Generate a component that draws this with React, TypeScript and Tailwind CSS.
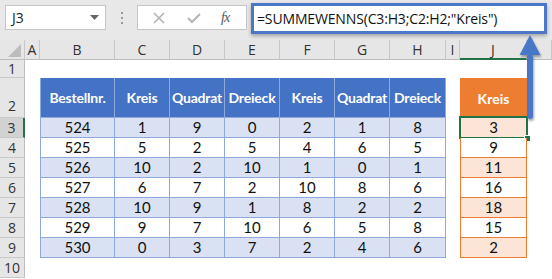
import React from "react";

const widths = [25, 15, 75, 55, 55, 55, 55, 55, 56, 14, 67, 25];
const letters = ["", "A", "B", "C", "D", "E", "F", "G", "H", "I", "J", ""];

const heads = ["Bestellnr.", "Kreis", "Quadrat", "Dreieck", "Kreis", "Quadrat", "Dreieck"];

const rows = [
	[524, 1, 9, 0, 2, 1, 8, 3],
	[525, 5, 2, 5, 4, 6, 5, 9],
	[526, 10, 2, 10, 1, 0, 1, 11],
	[527, 6, 7, 2, 10, 8, 6, 16],
	[528, 10, 9, 1, 8, 2, 2, 18],
	[529, 9, 7, 10, 6, 5, 8, 15],
	[530, 0, 3, 7, 2, 4, 6, 2],
];

const cellFont = { fontFamily: "Lato, 'Liberation Sans', sans-serif" };
const uiFont = { fontFamily: "'Open Sans', 'Noto Sans', sans-serif" };

const RowHead = ({ n, h, selected, bottom }: { n: number; h: string; selected?: boolean; bottom?: boolean }) => (
	<div
		className={`w-[25px] shrink-0 ${h} flex justify-center border-b border-[#c8c8c8] text-[14px] text-[#333] ${
			bottom ? "items-end pb-[1px]" : "items-center"
		} ${selected ? "bg-[#d2d2d2] border-r-2 border-r-[#217346]" : "bg-[#e6e6e6] border-r border-r-[#bdbdbd]"}`}
		style={uiFont}
	>
		{n}
	</div>
);

export default function App() {
	return (
		<div className="relative w-[552px] h-[279px] overflow-hidden bg-white">
			{/* formula bar area */}
			<div className="flex items-start h-[40px] bg-[#e8e8e8]">
				<div className="ml-[5px] mt-[5px] w-[101px] h-[25px] bg-white border border-[#c6c6c6] flex items-center justify-between pl-[6px] pr-[6px]">
					<span className="text-[14px] text-[#222]" style={uiFont}>J3</span>
					<svg width="9" height="5" viewBox="0 0 9 5">
						<polygon points="0,0 9,0 4.5,5" fill="#666" />
					</svg>
				</div>
				<div className="w-[31px] mt-[12px] flex flex-col items-center gap-[3px]">
					<div className="w-[2px] h-[2px] bg-[#9a9a9a]" />
					<div className="w-[2px] h-[2px] bg-[#9a9a9a]" />
					<div className="w-[2px] h-[2px] bg-[#9a9a9a]" />
				</div>
				<div className="mt-[5px] w-[110px] h-[25px] bg-white border border-[#c6c6c6] flex items-center">
					<svg className="ml-[15px]" width="12" height="12" viewBox="0 0 12 12">
						<path d="M1 1 L11 11 M11 1 L1 11" stroke="#b4b4b4" strokeWidth="1.6" />
					</svg>
					<svg className="ml-[22px]" width="14" height="12" viewBox="0 0 14 12">
						<path d="M1 6 L5 10 L13 2" stroke="#b4b4b4" strokeWidth="2" fill="none" />
					</svg>
					<span className="ml-[20px] text-[14px] italic text-[#555] tracking-[-1px]" style={{ fontFamily: "'Liberation Serif', serif" }}>
						fx
					</span>
				</div>
				<div className="ml-[4px] mt-[3px] w-[296px] h-[31px] bg-white border-[3px] border-[#4a77c8] shadow-[0_2px_4px_rgba(0,0,0,0.3)] flex items-center pl-[3px]">
					<span className="text-[14px] text-[#111] tracking-[-0.15px]" style={uiFont}>
						=SUMMEWENNS(C3:H3;C2:H2;"Kreis")
					</span>
				</div>
			</div>

			{/* column headers */}
			<div className="flex h-[20px]">
				{letters.map((l, i) => (
					<div
						key={i}
						style={{ width: widths[i], ...uiFont }}
						className={`shrink-0 h-[20px] flex items-center justify-center text-[14px] text-[#333] bg-[#e6e6e6] border-r border-r-[#c8c8c8] ${
							l === "J" ? "border-b-2 border-b-[#217346]" : "border-b border-b-[#bdbdbd]"
						}`}
					>
						{i === 0 ? (
							<svg width="20" height="18" viewBox="0 0 20 18" className="mt-[1px] ml-[1px]">
								<polygon points="18,3 18,16 5,16" fill="#bdbdbd" />
							</svg>
						) : (
							l
						)}
					</div>
				))}
			</div>

			{/* row 1 */}
			<div className="flex h-[18px]">
				<RowHead n={1} h="h-[18px]" />
			</div>

			{/* row 2: headers */}
			<div className="flex h-[40px]">
				<RowHead n={2} h="h-[40px]" bottom />
				<div className="w-[15px] shrink-0" />
				{heads.map((t, i) => (
					<div
						key={i}
						style={{ width: widths[i + 2], ...cellFont }}
						className={`shrink-0 bg-[#4472c4] border-r border-b border-[#8ea9db] ${
							i === 0 ? "border-l" : ""
						} flex items-center justify-center text-white font-bold text-[14px] tracking-[-0.2px] whitespace-nowrap`}
					>
						{t}
					</div>
				))}
				<div className="w-[14px] shrink-0" />
				<div
					className="w-[67px] shrink-0 bg-[#ed7d31] flex items-center justify-center text-white font-bold text-[14px] border-l border-r border-[#ed7d31]"
					style={cellFont}
				>
					Kreis
				</div>
			</div>

			{/* data rows */}
			{rows.map((r, ri) => {
				const band = ri % 2 === 0;
				return (
					<div key={ri} className="flex h-[20px]">
						<RowHead n={ri + 3} h="h-[20px]" selected={ri === 0} />
						<div className="w-[15px] shrink-0" />
						{r.slice(0, 7).map((v, ci) => (
							<div
								key={ci}
								style={{ width: widths[ci + 2], ...cellFont }}
								className={`shrink-0 border-r border-b border-[#8ea9db] ${ci === 0 ? "border-l" : ""} ${
									band ? "bg-[#d9e1f2]" : "bg-white"
								} flex items-center justify-center text-[15px] text-[#111]`}
							>
								{v}
							</div>
						))}
						<div className="w-[14px] shrink-0" />
						<div
							className={`relative w-[67px] shrink-0 border-l border-r border-b border-[#ed7d31] ${
								band ? "bg-[#fce4d6]" : "bg-white"
							} flex items-center justify-center text-[15px] text-[#111]`}
							style={cellFont}
						>
							{r[7]}
							{ri === 0 && (
								<div className="absolute -left-[2px] -top-[2px] w-[69px] h-[23px] border-2 border-[#217346]">
									<div className="absolute -right-[5px] -bottom-[5px] w-[7px] h-[7px] bg-[#217346] border border-white" />
								</div>
							)}
						</div>
					</div>
				);
			})}

			{/* row 10 */}
			<div className="flex h-[20px]">
				<RowHead n={10} h="h-[20px]" />
			</div>

			{/* arrow */}
			<svg className="absolute left-[518px] top-[33px]" width="26" height="92" viewBox="0 0 26 92">
				<defs>
					<filter id="sh" x="-50%" y="-20%" width="200%" height="150%">
						<feDropShadow dx="1" dy="2" stdDeviation="1.2" floodColor="#000" floodOpacity="0.35" />
					</filter>
				</defs>
				<g filter="url(#sh)">
					<polygon points="12,2 22.5,22 1.5,22" fill="#4a77c8" />
					<rect x="9" y="21" width="6" height="65" rx="3" fill="#4a77c8" />
				</g>
			</svg>
		</div>
	);
}
